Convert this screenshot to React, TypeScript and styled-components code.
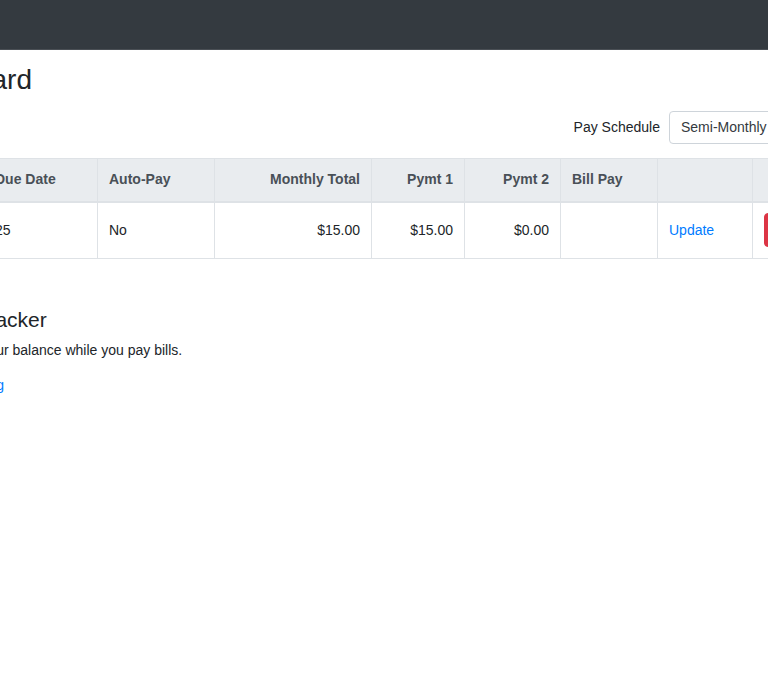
import styled, { createGlobalStyle } from "styled-components";

const GlobalStyle = createGlobalStyle`
  html, body {
    margin: 0;
    padding: 0;
    background: #fff;
    overflow-x: hidden;
  }
  body {
    font-family: "Liberation Sans", Arial, sans-serif;
    font-size: 14px;
    line-height: 1.5;
    color: #212529;
  }
`;

const Viewport = styled.div`
  width: 100%;
  min-height: 675px;
  overflow: hidden;
`;

const Navbar = styled.nav`
  height: 49px;
  background-color: #343a40;
  border-bottom: 1px solid #4a4f55;
`;

const Main = styled.main`
  width: 945px;
  margin-left: -105px;
  padding-top: 13px;
`;

const Title = styled.h2`
  margin: 0 0 14px;
  font-size: 28px;
  font-weight: 500;
  line-height: 1.2;
`;

const Toolbar = styled.div`
  display: flex;
  justify-content: flex-end;
  align-items: center;
  gap: 9px;
`;

const Label = styled.label`
  font-size: 14px;
`;

const Select = styled.select`
  width: 171px;
  height: 33px;
  padding: 0 11px;
  font-family: inherit;
  font-size: 14px;
  color: #343a40;
  background: #fff;
  border: 1px solid #ced4da;
  border-radius: 4px;
  appearance: none;
`;

const Table = styled.table`
  width: 945px;
  margin-top: 14px;
  border-collapse: collapse;
  table-layout: fixed;
`;

const Th = styled.th<{ $w: number; $right?: boolean }>`
  box-sizing: border-box;
  width: ${(p) => p.$w}px;
  padding: 10.5px 11px;
  text-align: ${(p) => (p.$right ? "right" : "left")};
  font-weight: 700;
  color: #495057;
  background-color: #e9ecef;
  border: 1px solid #dee2e6;
  border-bottom-width: 2px;
`;

const Td = styled.td<{ $right?: boolean }>`
  padding: 10.5px 11px;
  text-align: ${(p) => (p.$right ? "right" : "left")};
  border: 1px solid #dee2e6;
  white-space: nowrap;
`;

const LinkText = styled.a`
  color: #007bff;
  text-decoration: none;
`;

const DangerButton = styled.button`
  height: 34px;
  padding: 0 12px;
  font-family: inherit;
  font-size: 14px;
  color: #fff;
  background-color: #dc3545;
  border: 1px solid #dc3545;
  border-radius: 4px;
`;

const Section = styled.section`
  margin-top: 48px;
`;

const SectionTitle = styled.h4`
  margin: 0 0 8px;
  font-size: 21px;
  font-weight: 500;
  line-height: 1.2;
`;

const Lead = styled.p`
  margin: 0 0 14px;
`;

const columns = [
  { label: "Bill", w: 88 },
  { label: "Due Date", w: 114 },
  { label: "Auto-Pay", w: 117 },
  { label: "Monthly Total", w: 157, right: true },
  { label: "Pymt 1", w: 93, right: true },
  { label: "Pymt 2", w: 96, right: true },
  { label: "Bill Pay", w: 97 },
  { label: "", w: 95 },
  { label: "", w: 88 },
];

export default function App() {
  return (
    <>
      <GlobalStyle />
      <Viewport>
        <Navbar />
        <Main>
          <Title>Dashboard</Title>
          <Toolbar>
            <Label htmlFor="schedule">Pay Schedule</Label>
            <Select id="schedule" defaultValue="semi">
              <option value="semi">Semi-Monthly</option>
              <option value="monthly">Monthly</option>
            </Select>
          </Toolbar>
          <Table>
            <thead>
              <tr>
                {columns.map((c, i) => (
                  <Th key={i} $w={c.w} $right={c.right}>
                    {c.label}
                  </Th>
                ))}
              </tr>
            </thead>
            <tbody>
              <tr>
                <Td>Rent</Td>
                <Td>25</Td>
                <Td>No</Td>
                <Td $right>$15.00</Td>
                <Td $right>$15.00</Td>
                <Td $right>$0.00</Td>
                <Td></Td>
                <Td>
                  <LinkText href="#">Update</LinkText>
                </Td>
                <Td>
                  <DangerButton>Delete</DangerButton>
                </Td>
              </tr>
            </tbody>
          </Table>
          <Section>
            <SectionTitle>Balance Tracker</SectionTitle>
            <Lead>Keep track of your balance while you pay bills.</Lead>
            <LinkText href="#">Start Bill Tracking</LinkText>
          </Section>
        </Main>
      </Viewport>
    </>
  );
}
